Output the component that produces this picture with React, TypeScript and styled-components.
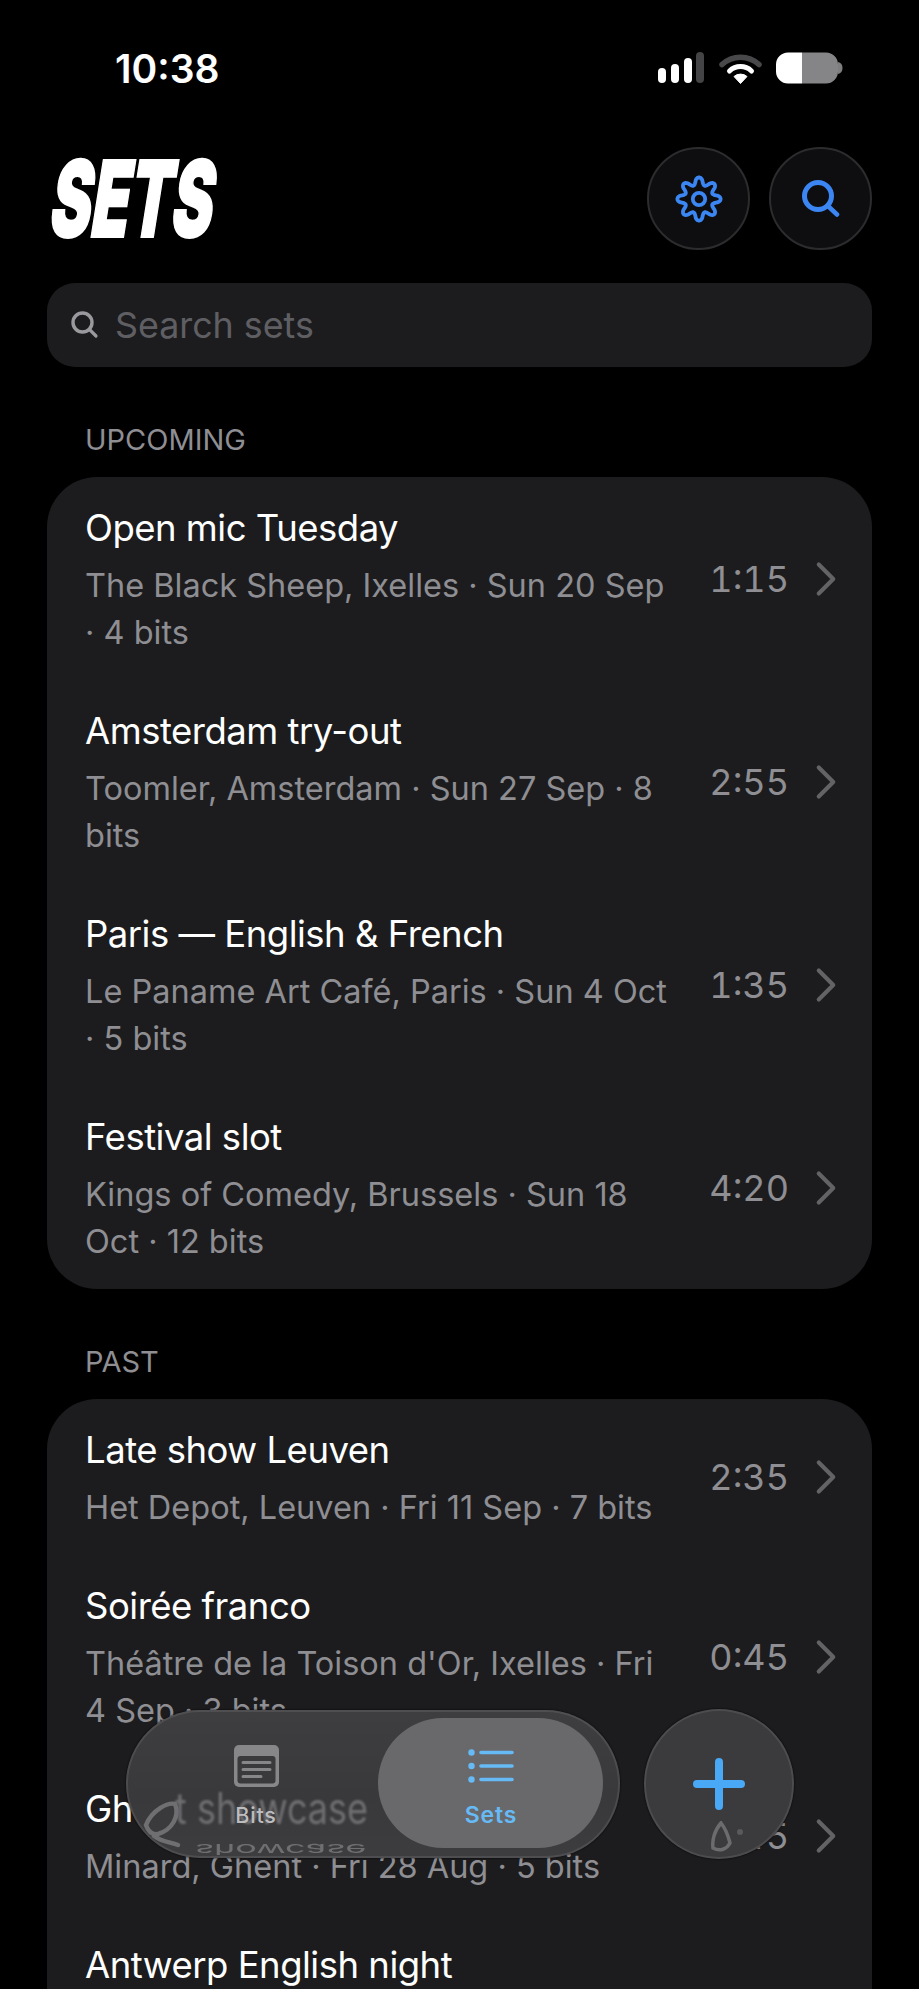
import React from "react";
import styled, { createGlobalStyle } from "styled-components";
import { ChevronRight } from "lucide-react";

const Global = createGlobalStyle`
  html, body { margin: 0; padding: 0; background: #000; }
  #root { width: 919px; height: 1989px; }
`;

const Screen = styled.div`
  position: relative;
  width: 919px;
  height: 1989px;
  overflow: hidden;
  background: #000;
  color: #fff;
  font-family: Inter, "Liberation Sans", sans-serif;
`;

const StatusBar = styled.div`
  height: 136px;
  padding: 0 76px 0 115px;
  box-sizing: border-box;
  display: flex;
  align-items: center;
  justify-content: space-between;
`;
const Clock = styled.div`
  font-size: 39px;
  font-weight: 600;
  line-height: 40px;
  margin-top: 1px;
`;
const StatusIcons = styled.div`
  display: flex;
  align-items: center;
  gap: 14px;
`;

const Header = styled.header`
  margin: 11px 47px 0 53px;
  height: 103px;
  display: flex;
  align-items: center;
  justify-content: space-between;
`;
const Title = styled.h1`
  margin: 0;
  font-size: 106px;
  line-height: 103px;
  font-weight: 900;
  transform-origin: left center;
  transform: skewX(-9deg) scaleX(0.584);
  -webkit-text-stroke: 2px #fff;
`;
const HeaderButtons = styled.div`
  display: flex;
  gap: 19px;
`;
const RoundButton = styled.div`
  width: 103px;
  height: 103px;
  box-sizing: border-box;
  border-radius: 50%;
  border: 2px solid #2c2c2e;
  background: #0e0e11;
  color: #3b86f2;
  display: flex;
  align-items: center;
  justify-content: center;
`;

const SearchBar = styled.div`
  margin: 33px 47px 0;
  height: 84px;
  border-radius: 28px;
  background: #1c1c1e;
  padding-left: 19px;
  display: flex;
  align-items: center;
  gap: 15px;
  color: #9a9a9e;
`;
const SearchText = styled.span`
  font-size: 35.8px;
  color: #5f5f63;
`;

const SectionLabel = styled.div`
  margin: 0 47px 20px 85px;
  padding-top: 56px;
  font-size: 29px;
  line-height: 34px;
  color: #8e8e93;
`;
const Card = styled.div`
  margin: 0 47px;
  border-radius: 50px;
  background: #1c1c1e;
`;
const Row = styled.div<{ $h: number }>`
  height: ${(p) => p.$h}px;
  padding: 29px 34px 0 38px;
  box-sizing: border-box;
  display: flex;
  align-items: flex-start;
  justify-content: space-between;
`;
const RowText = styled.div`
  display: flex;
  flex-direction: column;
`;
const RowTitle = styled.div`
  font-size: 36.5px;
  line-height: 44px;
  letter-spacing: -0.5px;
  white-space: nowrap;
  margin-bottom: 12px;
`;
const RowSub = styled.div`
  font-size: 32.5px;
  line-height: 47px;
  color: #8e8e93;
  white-space: nowrap;
`;
const RowEnd = styled.div`
  align-self: center;
  margin-top: -29px;
  display: flex;
  align-items: center;
  color: #8e8e93;
`;
const Duration = styled.span`
  font-size: 36px;
  line-height: 44px;
  font-variant-numeric: tabular-nums;
`;
const Chevron = styled(ChevronRight)`
  color: #636366;
  margin: 0 -17px 0 8px;
`;

const TabBar = styled.div`
  position: absolute;
  left: 126px;
  top: 1710px;
  width: 494px;
  height: 148px;
  box-sizing: border-box;
  border-radius: 74px;
  overflow: hidden;
  background: linear-gradient(180deg, #3e3e41 0%, #39393c 60%, #3d3d40 100%);
  box-shadow: inset 0 0 0 2px rgba(255, 255, 255, 0.09), 0 0 2px #000;
`;
const Refraction = styled.span`
  position: absolute;
  left: 49px;
  top: 74px;
  font-size: 36px;
  line-height: 48px;
  white-space: nowrap;
  color: #6f6f72;
  transform-origin: left center;
  transform: scaleY(1.2);
  filter: blur(0.8px);
`;
const RefractionMirror = styled.span`
  position: absolute;
  left: 69px;
  top: 133px;
  font-size: 36px;
  line-height: 30px;
  white-space: nowrap;
  color: #6f6f72;
  transform-origin: left top;
  transform: scaleY(-0.42) translateY(-30px);
  filter: blur(0.4px);
`;
const LensMark = styled.svg`
  position: absolute;
`;
const ActivePill = styled.div`
  position: absolute;
  left: 252px;
  top: 8px;
  width: 225px;
  height: 130px;
  border-radius: 65px;
  background: #69696c;
`;
const Tab = styled.div<{ $left: number; $width: number }>`
  position: absolute;
  left: ${(p) => p.$left}px;
  top: 35px;
  width: ${(p) => p.$width}px;
  height: 85px;
  display: flex;
  flex-direction: column;
  align-items: center;
`;
const TabIconBox = styled.div`
  height: 42px;
  display: flex;
  align-items: center;
`;
const TabLabel = styled.div<{ $active?: boolean }>`
  margin-top: 15px;
  font-size: ${(p) => (p.$active ? 23 : 21.5)}px;
  line-height: 26px;
  font-weight: ${(p) => (p.$active ? 600 : 500)};
  letter-spacing: 0.8px;
  color: ${(p) => (p.$active ? "#66baf6" : "#bdbdbf")};
`;

const PlusButton = styled.div`
  position: absolute;
  left: 644px;
  top: 1709px;
  width: 150px;
  height: 150px;
  box-sizing: border-box;
  border-radius: 50%;
  overflow: hidden;
  background: #3b3b3e;
  box-shadow: inset 0 0 0 2px rgba(255, 255, 255, 0.09), 0 0 2px #000;
  display: flex;
  align-items: center;
  justify-content: center;
`;

type Item = { title: string; sub: string[]; time: string };

const upcoming: Item[] = [
  { title: "Open mic Tuesday", sub: ["The Black Sheep, Ixelles · Sun 20 Sep", "· 4 bits"], time: "1:15" },
  { title: "Amsterdam try-out", sub: ["Toomler, Amsterdam · Sun 27 Sep · 8", "bits"], time: "2:55" },
  { title: "Paris — English & French", sub: ["Le Paname Art Café, Paris · Sun 4 Oct", "· 5 bits"], time: "1:35" },
  { title: "Festival slot", sub: ["Kings of Comedy, Brussels · Sun 18", "Oct · 12 bits"], time: "4:20" },
];
const past: Item[] = [
  { title: "Late show Leuven", sub: ["Het Depot, Leuven · Fri 11 Sep · 7 bits"], time: "2:35" },
  { title: "Soirée franco", sub: ["Théâtre de la Toison d'Or, Ixelles · Fri", "4 Sep · 3 bits"], time: "0:45" },
  { title: "Ghent showcase", sub: ["Minard, Ghent · Fri 28 Aug · 5 bits"], time: "1:45" },
  { title: "Antwerp English night", sub: ["De Koninklijke Nor, Antwerp · Thu 20", "Aug · 6 bits"], time: "3:10" },
];

const ListRow = ({ item }: { item: Item }) => (
  <Row $h={item.sub.length > 1 ? 203 : 156}>
    <RowText>
      <RowTitle>{item.title}</RowTitle>
      {item.sub.map((line) => (
        <RowSub key={line}>{line}</RowSub>
      ))}
    </RowText>
    <RowEnd>
      <Duration>{item.time}</Duration>
      <Chevron size={58} strokeWidth={1.7} />
    </RowEnd>
  </Row>
);

// A cog outline: eight rounded teeth around a centre, sampled along r(θ).
const cogPath = (() => {
  const pts: string[] = [];
  const n = 240;
  for (let i = 0; i < n; i++) {
    const t = (i / n) * Math.PI * 2;
    const wave = Math.cos(8 * t);
    const r = 18 + 3.6 * Math.sign(wave) * Math.pow(Math.abs(wave), 0.75);
    pts.push(`${(25 + r * Math.sin(t)).toFixed(2)} ${(25 - r * Math.cos(t)).toFixed(2)}`);
  }
  return `M${pts.join(" L")} Z`;
})();

const GearIcon = () => (
  <svg width="50" height="50" viewBox="0 0 50 50" fill="none" stroke="currentColor">
    <path d={cogPath} strokeWidth="3.8" strokeLinejoin="round" />
    <circle cx="25" cy="25" r="6.2" strokeWidth="3.8" />
  </svg>
);
const SearchGlyph = () => (
  <svg width="38" height="38" viewBox="0 0 38 38" fill="none" stroke="currentColor" strokeLinecap="round">
    <circle cx="16" cy="16" r="13.5" strokeWidth="5" />
    <path d="M26.5 26.5 L35 34.5" strokeWidth="4.5" />
  </svg>
);
const SmallSearchGlyph = () => (
  <svg width="30" height="30" viewBox="0 0 30 30" fill="none" stroke="currentColor" strokeLinecap="round" style={{ marginLeft: 4 }}>
    <circle cx="12.5" cy="12.5" r="9.5" strokeWidth="3.4" />
    <path d="M19.5 19.5 L26 26" strokeWidth="3.2" />
  </svg>
);
const SignalIcon = () => (
  <svg width="46" height="32" viewBox="0 0 46 32" style={{ marginRight: 1 }}>
    <rect x="0" y="16" width="8" height="15" rx="4" fill="#fff" />
    <rect x="13" y="12" width="8" height="19" rx="4" fill="#fff" />
    <rect x="26" y="6" width="8" height="25" rx="4" fill="#fff" />
    <rect x="38" y="0" width="8" height="31" rx="4" fill="#444446" />
  </svg>
);
const WifiIcon = () => (
  <svg width="43" height="32" viewBox="0 0 43 32" fill="none">
    <path d="M3 12.5 A27 27 0 0 1 40 12.5" stroke="#48484a" strokeWidth="5.5" strokeLinecap="round" />
    <path d="M10.5 19 A16 16 0 0 1 32.5 19" stroke="#fff" strokeWidth="5" strokeLinecap="round" />
    <path d="M15 24.5 A10 10 0 0 1 28 24.5 L21.5 31.5 Z" fill="#fff" stroke="#fff" strokeWidth="1" strokeLinejoin="round" />
  </svg>
);
const BatteryIcon = () => (
  <svg width="67" height="32" viewBox="0 0 67 32">
    <path d="M62 10 C65 10.5 66.5 13 66.5 16 C66.5 19 65 21.5 62 22 Z" fill="#7f7f81" />
    <path d="M26 0.5 H50 A12 12 0 0 1 62 12.5 V19.5 A12 12 0 0 1 50 31.5 H26 Z" fill="#858587" />
    <path d="M26 0.5 H12 A12 12 0 0 0 0 12.5 V19.5 A12 12 0 0 0 12 31.5 H26 Z" fill="#fff" />
  </svg>
);
const BitsIcon = () => (
  <svg width="45" height="42" viewBox="0 0 45 42" fill="none">
    <rect width="45" height="42" rx="5" fill="#878789" />
    <rect x="3.5" y="11" width="38" height="27.5" rx="3" fill="#3a3a3d" />
    <path d="M9 17.5 H36 M9 24.5 H36 M9 31.5 H27" stroke="#878789" strokeWidth="3" strokeLinecap="round" />
  </svg>
);
const SetsIcon = () => (
  <svg width="46" height="34" viewBox="0 0 46 34" fill="none">
    <circle cx="3.5" cy="3.5" r="3.2" fill="#66baf6" />
    <circle cx="3.5" cy="17" r="3.2" fill="#66baf6" />
    <circle cx="3.5" cy="30.5" r="3.2" fill="#66baf6" />
    <path d="M13 3.5 H44 M13 17 H44 M13 30.5 H44" stroke="#66baf6" strokeWidth="3.6" strokeLinecap="round" />
  </svg>
);

export default function App() {
  return (
    <Screen>
      <Global />
      <StatusBar>
        <Clock>10:38</Clock>
        <StatusIcons>
          <SignalIcon />
          <WifiIcon />
          <BatteryIcon />
        </StatusIcons>
      </StatusBar>

      <Header>
        <Title>SETS</Title>
        <HeaderButtons>
          <RoundButton>
            <GearIcon />
          </RoundButton>
          <RoundButton>
            <SearchGlyph />
          </RoundButton>
        </HeaderButtons>
      </Header>

      <SearchBar>
        <SmallSearchGlyph />
        <SearchText>Search sets</SearchText>
      </SearchBar>

      <SectionLabel>UPCOMING</SectionLabel>
      <Card>
        {upcoming.map((item) => (
          <ListRow key={item.title} item={item} />
        ))}
      </Card>

      <SectionLabel>PAST</SectionLabel>
      <Card>
        {past.map((item) => (
          <ListRow key={item.title} item={item} />
        ))}
      </Card>

      <TabBar>
        <Refraction aria-hidden>t showcase</Refraction>
        <RefractionMirror aria-hidden>showcase</RefractionMirror>
        <LensMark width="50" height="50" viewBox="0 0 50 50" fill="none" style={{ left: 16, top: 88 }}>
          <path d="M4 27 C10 12 26 4 33 6 C38 18 30 32 16 36 C10 37 6 33 4 27 Z M12 38 C20 44 28 44 36 47" stroke="#6f6f72" strokeWidth="4.5" strokeLinecap="round" />
        </LensMark>
        <ActivePill />
        <Tab $left={60} $width={140}>
          <TabIconBox>
            <BitsIcon />
          </TabIconBox>
          <TabLabel>Bits</TabLabel>
        </Tab>
        <Tab $left={295} $width={140}>
          <TabIconBox>
            <SetsIcon />
          </TabIconBox>
          <TabLabel $active>Sets</TabLabel>
        </Tab>
      </TabBar>

      <PlusButton>
        <svg width="52" height="52" viewBox="0 0 52 52" fill="none">
          <path d="M26 4 V48 M4 26 H48" stroke="#4aa9f6" strokeWidth="8" strokeLinecap="round" />
        </svg>
        <LensMark width="40" height="34" viewBox="0 0 40 34" fill="none" style={{ left: 66, top: 112 }}>
          <path d="M11 2 C4 10 2 20 3 27 C10 31 17 28 20 22 C18 14 15 7 11 2 Z" stroke="#6c6c6f" strokeWidth="3.5" />
          <circle cx="30" cy="11" r="3" fill="#5a5a5d" />
        </LensMark>
      </PlusButton>
    </Screen>
  );
}
